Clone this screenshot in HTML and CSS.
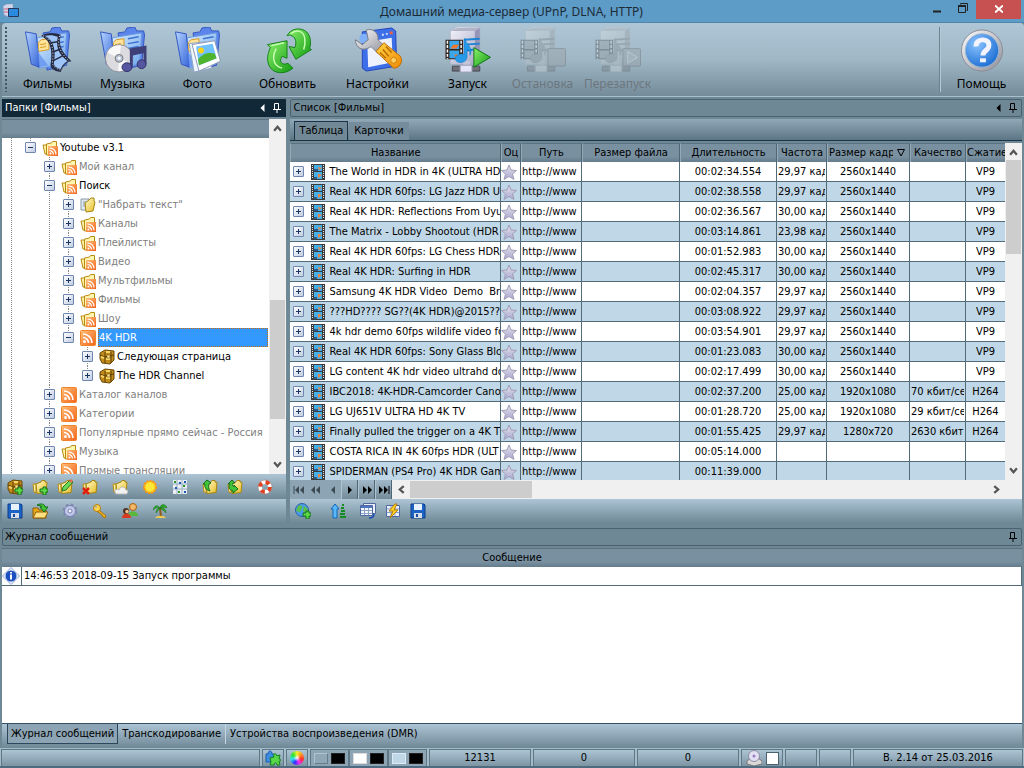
FILE: index.html
```html
<!DOCTYPE html>
<html lang="ru">

<head>
    <meta charset="UTF-8">
    <meta name="viewport" content="width=device-width, initial-scale=1.0">
    <title>Домашний медиа-сервер (UPnP, DLNA, HTTP)</title>
    <link rel="stylesheet" href="styles.css">
</head>

<body>
    <svg class="sprite" aria-hidden="true">
        <defs>
            <linearGradient id="gBlue" x1="0" y1="0" x2="1" y2="1">
                <stop offset="0" stop-color="#b5d4ff" />
                <stop offset="1" stop-color="#3565d8" />
            </linearGradient>
            <linearGradient id="gPaper" x1="0" y1="0" x2="1" y2="1">
                <stop offset="0" stop-color="#d8ecff" />
                <stop offset="1" stop-color="#6ba4ec" />
            </linearGradient>
            <linearGradient id="gGreen" x1="0" y1="0" x2="1" y2="1">
                <stop offset="0" stop-color="#8cf06c" />
                <stop offset="1" stop-color="#119b12" />
            </linearGradient>
            <linearGradient id="gMetal" x1="0" y1="0" x2="1" y2="1">
                <stop offset="0" stop-color="#ffffff" />
                <stop offset="1" stop-color="#8c8c98" />
            </linearGradient>
            <linearGradient id="gBody" x1="0" y1="0" x2="1" y2="1">
                <stop offset="0" stop-color="#f4f4fc" />
                <stop offset="1" stop-color="#a4a4c4" />
            </linearGradient>
            <linearGradient id="gOrange" x1="0" y1="0" x2="1" y2="1">
                <stop offset="0" stop-color="#ffd545" />
                <stop offset="1" stop-color="#ef8a08" />
            </linearGradient>
            <linearGradient id="gRss" x1="0" y1="0" x2="1" y2="1">
                <stop offset="0" stop-color="#ffc078" />
                <stop offset="1" stop-color="#f4621c" />
            </linearGradient>
            <linearGradient id="gFold" x1="0" y1="0" x2="1" y2="1">
                <stop offset="0" stop-color="#fffbd0" />
                <stop offset="1" stop-color="#e8bc20" />
            </linearGradient>
            <linearGradient id="gStar" x1="0" y1="0" x2="0" y2="1">
                <stop offset="0" stop-color="#e6e6ea" />
                <stop offset="1" stop-color="#a9a4d2" />
            </linearGradient>
            <radialGradient id="gHelp" cx=".35" cy=".3" r=".8">
                <stop offset="0" stop-color="#8cc4ff" />
                <stop offset="1" stop-color="#1468d0" />
            </radialGradient>
        </defs>

        <!-- big toolbar -->
        <symbol id="folder" viewBox="0 0 48 48">
            <path d="M19 6l7-1 2-4 8-1 2 4 7 0 1 4-3 31-20 5z" fill="#5b85ea" stroke="#3558c0" />
            <path d="M13 11l30-5-2 32-26 4z" fill="url(#gPaper)" stroke="#6c9ae0" />
            <path d="M29 12l11-2M29 17l11-2M29 22l11-2" stroke="#3d72d0" stroke-width="1.5" />
            <path d="M14 16l3-3 8-1v11l-11 2z" fill="#ffe39a" stroke="#d99a20" />
            <path d="M16 18l6-1M16 21l6-1" stroke="#d99a20" />
            <path d="M1 5l11 2 3 34-8-3z" fill="url(#gBlue)" stroke="#3558c0" />
            <path d="M11 12l4 29 9-2-9-12z" fill="#5c8cf0" opacity=".7" />
        </symbol>
        <symbol id="films" viewBox="0 0 48 48">
            <use href="#folder" />
            <path d="M17 9c8-4 14-3 20-1-2 9-1 16 11 27-5 0-9 5-11 11-7-1-12-4-10-10 1-11 1-21-10-27z" fill="#252b45" />
            <path d="M21 9c5-1 8-1 13 1-2 10 0 17 10 25-3 1-6 5-7 8-4-1-7-3-7-6 2-12 1-22-9-28z" fill="#9fc4f8" />
            <path d="M27 16l7-1M30 25l6-2M30 34l10-5" stroke="#252b45" stroke-width="1.5" />
            <path d="M19 9c10 5 11 15 9.500 27 0 4 3 6 8 8M36 9c-3 9 0 17 10 26" fill="none" stroke="#e8ecf5" stroke-dasharray="1 2" />
        </symbol>
        <symbol id="music" viewBox="0 0 48 48">
            <use href="#folder" />
            <circle cx="20" cy="32" r="14" fill="#dcdce0" stroke="#8f8f98" />
            <path d="M20 32L8 26c3-6 9-8 14-7zM20 32l12 5c-3 6-8 8-13 8z" fill="#fff" opacity=".8" />
            <circle cx="20" cy="32" r="4" fill="#b8c4d8" stroke="#777" />
            <circle cx="20" cy="32" r="1.5" fill="#fff" />
            <path d="M31 22l17-3v7l-14 3v12h-3zM45 24h3v14h-3z" fill="#3e3f78" />
            <ellipse cx="28" cy="41" rx="5" ry="4.500" fill="#5656a0" stroke="#303068" />
            <ellipse cx="43" cy="38" rx="4.500" ry="4.500" fill="#5656a0" stroke="#303068" />
        </symbol>
        <symbol id="photo" viewBox="0 0 48 48">
            <use href="#folder" />
            <path d="M15 17l17-2 6 27-18 4z" fill="#eef5ff" stroke="#8fa4c4" />
            <path d="M18 18l23-4 6 21-22 10z" fill="#fff" stroke="#8a9ab8" />
            <path d="M22 20l17-3 4 15-18 7z" fill="#6fc1ff" />
            <path d="M24 33c6-7 11-7 17-6l2 5-18 7z" fill="#4fb52e" />
            <circle cx="27" cy="24" r="3" fill="#ffd21a" />
        </symbol>
        <symbol id="refresh" viewBox="0 0 48 48">
            <path d="M23 9C27 1 37 0 43 5c4 4 5 11 3 17l2 1-16 10-7-13 6 1c2-5 1-10-3-12-2-1-4-1-5 0z" fill="url(#gGreen)" stroke="#14801a" />
            <path d="M27 7c5-5 13-3 14 4 1 5 0 9-1 12" fill="none" stroke="#c9ffb4" stroke-width="1.500" />
            <path d="M3 18l20-4v18l-5-2c-4 5 0 10 6 7l5 5c-8 7-20 6-24-2-3-6-2-12 1-19z" fill="url(#gGreen)" stroke="#14801a" />
            <path d="M12 22c-5 9-3 18 6 20M7 19l13-3" fill="none" stroke="#c9ffb4" stroke-width="1.500" />
        </symbol>
        <symbol id="settings" viewBox="0 0 48 48">
            <path d="M8 5l30-4 4 3 1 36-31 5-4-3z" fill="#3d6fe8" stroke="#2447b8" />
            <path d="M13 15l25-4 1 25-25 5z" fill="#eef2ff" />
            <path d="M28 8h2M32 7h2" stroke="#cfe0ff" stroke-width="2" />
            <path d="M36 6h3" stroke="#f06040" stroke-width="3" />
            <circle cx="10" cy="12" r="5" fill="#7fb0f8" />
            <path d="M12 3c7-2 13 3 12 10l7 7-7 7-7-7C8 26 1 21 1 13l7 5 6-5z" fill="url(#gMetal)" stroke="#777a84" />
            <path d="M22 25l8-9 17 14c3 6-1 12-7 12z" fill="url(#gOrange)" stroke="#c06a00" />
            <path d="M29 23l6 7M32 20l6 6M26 26l6 6" stroke="#b86a00" stroke-width="1.500" />
            <circle cx="40" cy="34" r="3" fill="#ffd060" stroke="#d08008" />
        </symbol>
        <symbol id="server" viewBox="0 0 48 48">
            <path d="M6 4l7-4h23v33l-5 5H6z" fill="url(#gBody)" stroke="#a2a2b8" stroke-width=".5" />
            <path d="M6 4h25l5-3H13z" fill="#b4b4c8" />
            <path d="M31 4l5-3v32l-5 5z" fill="#9494b8" />
            <path d="M20 13l16-1M20 18l16-1M22 24l9-1" stroke="#1a83d2" stroke-width="2" />
            <path d="M19 35h7v5h-7z" fill="#c4c4d8" />
            <path d="M8 40h28v5H8z" fill="#70707c" stroke="#484850" />
            <path d="M16 39h12v7H16z" fill="#e4e4f8" stroke="#a0a0b8" />
            <path d="M1 13h18v20H1z" fill="#33251f" />
            <path d="M5 14h10v8.500H5zM5 24h10v8H5z" fill="#3ba6e8" />
            <path d="M9 18h6l-3 4H6zM10 28h4l-3 3z" fill="#f0762c" />
            <path d="M3 14v19M17 14v19" stroke="#fff" stroke-width="1.500" stroke-dasharray="3 1.500" />
            <path d="M21 12c1 6 9 9 5 17 0-5-1-6-3-6v8c-1 7-12 7-12 1 0-3 5-5 9-4V12z" fill="#2699e8" stroke="#0873c4" stroke-width=".5" />
        </symbol>
        <symbol id="start" viewBox="0 0 48 48">
            <use href="#server" />
            <path d="M30 21v20l17-10z" fill="url(#gGreen)" stroke="#127218" />
        </symbol>
        <symbol id="stop" viewBox="0 0 48 48">
            <use href="#server" />
            <rect x="29" y="22" width="18" height="18" rx="1" fill="#999" stroke="#555" />
        </symbol>
        <symbol id="restart" viewBox="0 0 48 48">
            <use href="#server" />
            <rect x="29" y="22" width="18" height="18" rx="1" fill="#999" stroke="#555" />
            <path d="M34 25v12l10-6z" fill="#aaa" stroke="#eee" />
        </symbol>
        <symbol id="help" viewBox="0 0 48 48">
            <circle cx="24" cy="24" r="21" fill="url(#gMetal)" stroke="#888c94" />
            <circle cx="24" cy="24" r="17" fill="url(#gHelp)" stroke="#9ab4d0" />
            <path d="M18 20c-1-9 14-9 13-1 0 5-6 5-6 10" fill="none" stroke="#f4f4ff" stroke-width="5" />
            <path d="M22 32h6v4h-6z" fill="#f4f4ff" />
        </symbol>

        <!-- 16px set -->
        <symbol id="app" viewBox="0 0 16 16">
            <path d="M0 2l4-2h6v12l-4 1-5-2z" fill="#d0d5e8" stroke="#8894b8" stroke-width=".5" />
            <path d="M1 5h5M1 8h4" stroke="#d06080" />
            <path d="M5.500 4.500h10v8h-10z" fill="#2a8ae0" stroke="#25385c" />
        </symbol>
        <symbol id="rss" viewBox="0 0 16 16">
            <rect x=".5" y=".5" width="15" height="15" rx="1" fill="url(#gRss)" stroke="#f08428" />
            <circle cx="4.500" cy="11.500" r="1.500" fill="#fff" />
            <path d="M3 7.500c3 0 5.500 2.500 5.500 5.500M3 4c5 0 9 4 9 9" fill="none" stroke="#fff" stroke-width="1.700" />
        </symbol>
        <symbol id="feeds" viewBox="0 0 16 16">
            <path d="M1 5h4v9H3z" fill="#fff3a8" stroke="#b88a10" />
            <path d="M4.500 4l5-1 1-1.500h4V7h-2v8h-8z" fill="#fff6b0" stroke="#b88a10" />
            <rect x="6" y="6" width="10" height="10" fill="url(#gRss)" />
            <path d="M7.500 10.500c2 0 4 2 4 4M7.500 8c4 0 6.500 3 6.500 6.500" fill="none" stroke="#fff" stroke-width="1.200" />
            <circle cx="8.500" cy="13.500" r="1" fill="#fff" />
        </symbol>
        <symbol id="search" viewBox="0 0 16 16">
            <path d="M1 2h8v11H1z" fill="#dfe9f4" stroke="#8898a8" />
            <path d="M3 5h4M3 7h4M3 9h4" stroke="#8898a8" />
            <path d="M5 6l4-3 2-2h3v3l1 1-2 9-7 1z" fill="url(#gFold)" stroke="#a8860c" />
        </symbol>
        <symbol id="chest" viewBox="0 0 16 16">
            <path d="M1 4l5-3 9 1v9l-4 4-8-1-2-4z" fill="#c08a18" stroke="#6b480a" />
            <path d="M6 3v11M1 6l5 2 9-2M12 3v11" fill="none" stroke="#5f3f08" />
            <path d="M7 3h4M7 10h4M2 8l3 1" stroke="#f6d568" stroke-width="2" />
            <path d="M8 6h3v3H8z" fill="#ffe88c" stroke="#5f3f08" stroke-width=".5" />
        </symbol>
        <symbol id="film" viewBox="0 0 14 16">
            <path d="M0 0h14v16H0z" fill="#3c3c3c" />
            <path d="M1.500 1v14M12.500 1v14" stroke="#e4e4e4" stroke-dasharray="1 1" />
            <path d="M3 1h8v6H3zM3 8h8v7H3z" fill="#48b0e8" />
            <path d="M7 3l4 1-3 2zM7 10l4 1-4 3z" fill="#f0803a" />
            <path d="M3 5h4v2H3zM3 13h3v2H3z" fill="#2a5a8a" />
        </symbol>
        <symbol id="star" viewBox="0 0 16 16">
            <path d="M8 1l2 5 5.500.5L11.500 10l1.500 5.500-5-3-5 3L4.500 10 .5 6.500 6 6z" fill="url(#gStar)" stroke="#a09eb6" />
        </symbol>
        <symbol id="fold" viewBox="0 0 16 16">
            <path d="M1 5h3v9l-2-1z" fill="#fff3a8" stroke="#b88a10" />
            <path d="M4 5l5-2 1-1.500h3V3l2 .5-1 10-9 1z" fill="url(#gFold)" stroke="#a8860c" />
        </symbol>
        <symbol id="plus" viewBox="0 0 16 16">
            <path d="M11 8h3v2h2v3h-2v3h-3v-3H8v-3h3z" fill="#5fd848" stroke="#137018" />
        </symbol>
        <symbol id="chestAdd" viewBox="0 0 16 16"><use href="#chest" /><use href="#plus" /></symbol>
        <symbol id="foldAdd" viewBox="0 0 16 16"><use href="#fold" /><use href="#plus" /></symbol>
        <symbol id="foldEdit" viewBox="0 0 16 16">
            <use href="#fold" />
            <path d="M5 12l1-4 7-7 3 2-7 8z" fill="#6cd858" stroke="#237a20" />
            <path d="M12 2l2-2 2 2-2 2z" fill="#e86850" />
        </symbol>
        <symbol id="foldDel" viewBox="0 0 16 16">
            <use href="#fold" />
            <path d="M1 9l6 6M7 9l-6 6" stroke="#e02010" stroke-width="2.500" />
        </symbol>
        <symbol id="foldCloud" viewBox="0 0 16 16">
            <use href="#fold" />
            <path d="M4 15c-3-4 1-6 3-4 1-4 6-4 7 0 3 0 2 4 0 4z" fill="#f2f2f2" stroke="#b8b8b8" />
        </symbol>
        <symbol id="sun" viewBox="0 0 16 16">
            <circle cx="8" cy="8" r="6" fill="#ffd020" stroke="#ff9810" stroke-width="2" stroke-dasharray="2 1" />
            <circle cx="8" cy="8" r="4.500" fill="#ffe838" />
        </symbol>
        <symbol id="grid" viewBox="0 0 16 16">
            <path d="M1 1h14v14H1z" fill="#e8eef4" />
            <path d="M1 5h14M1 10h14M5 1v14M10 1v14" stroke="#9ab0c0" />
            <path d="M2 2h2v2H2zM11 6h2v2h-2zM6 12h2v2H6z" fill="#28962c" />
            <path d="M7 3h2v2H7zM3 8h2v2H3zM12 12h2v2h-2zM12 2h2v2h-2z" fill="#2458b8" />
        </symbol>
        <symbol id="foldUp" viewBox="0 0 16 16">
            <use href="#fold" />
            <path d="M1 5l4-4 4 3-2 1c-1 3 0 5 1 7-4-1-6-4-5-7z" fill="#44c438" stroke="#126c18" />
        </symbol>
        <symbol id="foldBack" viewBox="0 0 16 16">
            <use href="#fold" />
            <path d="M1 5l4-4 3 3H6c-1 2 0 3 1 4V6l4 4-5 4v-2C2 11 1 8 3 5z" fill="#44c438" stroke="#126c18" />
        </symbol>
        <symbol id="ring" viewBox="0 0 16 16">
            <circle cx="8" cy="8" r="5" fill="none" stroke="#fff" stroke-width="4" />
            <circle cx="8" cy="8" r="5" fill="none" stroke="#e04020" stroke-width="4" stroke-dasharray="4 3.850" />
            <circle cx="8" cy="8" r="7" fill="none" stroke="#a07068" stroke-width=".5" />
        </symbol>
        <symbol id="save" viewBox="0 0 16 16">
            <path d="M1 1h13l1 1v13H1z" fill="#1c62c4" stroke="#0c3c8c" />
            <path d="M4 1h8v6H4z" fill="#e8f2fc" />
            <path d="M4 10h8v5H4z" fill="#d5dde8" />
            <path d="M6 11h2v3H6z" fill="#1c4c9c" />
        </symbol>
        <symbol id="open" viewBox="0 0 16 16">
            <path d="M1 5h5l1 2h7v8H1z" fill="#e8a818" stroke="#8a5c08" />
            <path d="M1 15l3-6h12l-3 6z" fill="#ffe080" stroke="#8a5c08" />
            <path d="M5 2c4-2 8-1 8 2h3l-4 5-4-5h2c0-1-2-1-5-2z" fill="#44c438" stroke="#126c18" />
        </symbol>
        <symbol id="gear" viewBox="0 0 16 16">
            <circle cx="8" cy="8" r="6" fill="#b4bcdc" stroke="#8088b0" stroke-width="3" stroke-dasharray="2.500 2.200" />
            <circle cx="8" cy="8" r="5.500" fill="#c0c8e8" stroke="#7880b0" />
            <circle cx="8" cy="8" r="2" fill="#f4f4ff" stroke="#7880b0" />
        </symbol>
        <symbol id="key" viewBox="0 0 16 16">
            <path d="M7 7l7 6-1 2-2-1-1-2-4-3z" fill="#f4b820" stroke="#a87008" />
            <circle cx="5" cy="5" r="3.500" fill="#ffd650" stroke="#b87c08" />
            <circle cx="4" cy="4" r="1" fill="#8ea6b4" />
        </symbol>
        <symbol id="users" viewBox="0 0 16 16">
            <circle cx="11" cy="4" r="3.500" fill="#f0b868" stroke="#a86010" />
            <path d="M6 13c0-6 10-6 10 0z" fill="#58b838" />
            <circle cx="4" cy="8" r="3" fill="#4a3020" />
            <path d="M0 15c0-6 9-6 9 0z" fill="#d83c20" />
            <circle cx="5" cy="8.500" r="1.700" fill="#f4c48c" />
        </symbol>
        <symbol id="palm" viewBox="0 0 16 16">
            <path d="M8 5l1 9" stroke="#8a5c18" stroke-width="2" />
            <path d="M8 5C5 1 2 3 1 7c3-3 5-2 7-2zM8 5c1-5 6-4 7 0-3-1-5-1-7 0zM8 5c4-1 6 2 6 5-2-3-4-3-6-5zM8 5c-3 0-4 3-4 5 1-2 3-3 4-5z" fill="#2aa828" stroke="#176c18" stroke-width=".5" />
            <path d="M3 15c2-3 9-3 11 0z" fill="#f0cc50" />
        </symbol>
        <symbol id="globe" viewBox="0 0 16 16">
            <circle cx="7" cy="7" r="6.500" fill="#4a9ce8" stroke="#2860a8" />
            <path d="M3 3c3-2 5 0 4 2L5 9 1 8zM9 3l4 3-2 4-3-2z" fill="#58c048" />
            <use href="#plus" />
        </symbol>
        <symbol id="sort" viewBox="0 0 16 16">
            <path d="M5 1l4 5H7v9H3V6H1z" fill="#58b8f8" stroke="#1468b8" />
            <path d="M12 2h2M11 5h3M11 8h4M10 11h5M10 14h6" stroke="#148c20" stroke-width="2" />
        </symbol>
        <symbol id="columns" viewBox="0 0 16 16">
            <path d="M3.500.5h12v10h-12z" fill="#e8f0fc" stroke="#5068a0" />
            <path d="M.5 2.500h12v10H.5z" fill="#f4f8ff" stroke="#5068a0" />
            <path d="M1 3h11v2H1z" fill="#4c74c0" />
            <path d="M1 7.500h11M1 10.500h11M4.500 5v7M8.500 5v7" stroke="#8ca0c8" />
            <path d="M9 15c4 0 5-2 5-4" fill="none" stroke="#1848b0" stroke-width="1.500" />
        </symbol>
        <symbol id="flash" viewBox="0 0 16 16">
            <path d="M1.500 2.500h13v11h-13z" fill="#e8f0fc" stroke="#5068a0" />
            <path d="M2 6h12M2 9.500h12M6 3v10M10 3v10" stroke="#8ca0c8" />
            <path d="M10 1L4 8h4l-3 7 8-8H9l3-6z" fill="#ffd628" stroke="#b87c08" />
        </symbol>
        <symbol id="info" viewBox="0 0 18 18">
            <path d="M9 .5L17.500 9 9 17.500.5 9z" fill="#e8eefc" stroke="#90a4d0" />
            <circle cx="9" cy="9" r="5.500" fill="#1c50c0" />
            <path d="M9 7.500v5M9 5v1.500" stroke="#fff" stroke-width="2" />
        </symbol>
        <symbol id="puzzle" viewBox="0 0 16 16">
            <path d="M1 4h2c0-4 4-4 4 0h2v8H1z" fill="#3c8ce0" stroke="#1c5cb0" />
            <path d="M5 8l4-1c-2-4 3-4 3-1l3-1-1 4c3 0 2 3 0 2l1 4h-3c0-3-3-3-3 0H5l1-3z" fill="#58d848" stroke="#178020" />
        </symbol>
        <symbol id="disc" viewBox="0 0 16 16">
            <path d="M1 11l4-3h7l4 3v3l-8 2-7-2z" fill="#d8d8d8" stroke="#777" />
            <circle cx="8" cy="6" r="5.500" fill="#e4e0f4" stroke="#8c8ca0" />
            <circle cx="8" cy="6" r="1.500" fill="#9c7cc0" />
        </symbol>

        <!-- small glyphs -->
        <symbol id="pin" viewBox="0 0 8 10">
            <path d="M1.500 6V.5h4V6M0 6.500h8M4 7v3M5.500 1v5" fill="none" stroke="currentColor" />
        </symbol>
        <symbol id="tri" viewBox="0 0 5 8">
            <path d="M4.500 0v8L.5 4z" fill="currentColor" />
        </symbol>
        <symbol id="chev" viewBox="0 0 8 8">
            <path d="M1 6l3-3.500L7 6" fill="none" stroke="currentColor" stroke-width="2" />
        </symbol>
    </svg>

    <header class="titlebar">
        <svg class="i16"><use href="#app" /></svg>
        <h1>Домашний медиа-сервер (UPnP, DLNA, HTTP)</h1>
        <button type="button" class="win" aria-label="Свернуть"><svg width="10" height="10"><path d="M1 8.500h8" stroke="#222" stroke-width="2" /></svg></button>
        <button type="button" class="win" aria-label="Развернуть"><svg width="10" height="10"><path d="M2.500 1.500V.5h7v7h-1M.5 3h7v6.500h-7z" fill="none" stroke="#222" /><path d="M0 3h8" stroke="#222" stroke-width="2" /></svg></button>
        <button type="button" class="win close" aria-label="Закрыть"><svg width="8" height="8"><path d="M0 .5l8 7M8 .5l-8 7" stroke="#fff" stroke-width="2" /></svg></button>
    </header>

    <nav class="toolbar">
        <span class="grip"></span>
        <button type="button"><svg><use href="#films" /></svg>Фильмы</button>
        <button type="button"><svg><use href="#music" /></svg>Музыка</button>
        <button type="button"><svg><use href="#photo" /></svg>Фото</button>
        <button type="button" class="apart"><svg><use href="#refresh" /></svg>Обновить</button>
        <button type="button" class="apart"><svg><use href="#settings" /></svg>Настройки</button>
        <button type="button" class="apart"><svg><use href="#start" /></svg>Запуск</button>
        <button type="button" disabled><svg><use href="#stop" /></svg>Остановка</button>
        <button type="button" disabled><svg><use href="#restart" /></svg>Перезапуск</button>
        <span class="divider"></span>
        <button type="button"><svg><use href="#help" /></svg>Помощь</button>
    </nav>

    <main class="workspace">
        <section class="folders">
            <div class="caption active">
                <h2>Папки [Фильмы]</h2>
                <svg class="tri"><use href="#tri" /></svg>
                <svg class="pin"><use href="#pin" /></svg>
            </div>
            <div class="tree_box">
                <div class="tree_main">
                    <div class="band"></div>
                    <div class="tree"></div>
                </div>
                <div class="vscroll">
                    <svg><use href="#chev" /></svg>
                    <div class="track tree_track"><span></span></div>
                    <svg class="down"><use href="#chev" /></svg>
                </div>
            </div>
            <div class="tools">
                <button type="button"><svg><use href="#chestAdd" /></svg></button>
                <button type="button"><svg><use href="#foldAdd" /></svg></button>
                <button type="button"><svg><use href="#foldEdit" /></svg></button>
                <button type="button"><svg><use href="#foldDel" /></svg></button>
                <button type="button" class="apart"><svg><use href="#foldCloud" /></svg></button>
                <button type="button" class="apart"><svg><use href="#sun" /></svg></button>
                <button type="button" class="apart"><svg><use href="#grid" /></svg></button>
                <button type="button" class="apart"><svg><use href="#foldUp" /></svg></button>
                <button type="button"><svg><use href="#foldBack" /></svg></button>
                <button type="button" class="apart"><svg><use href="#ring" /></svg></button>
            </div>
            <div class="tools">
                <button type="button"><svg><use href="#save" /></svg></button>
                <button type="button"><svg><use href="#open" /></svg></button>
                <button type="button" class="apart"><svg><use href="#gear" /></svg></button>
                <button type="button" class="apart"><svg><use href="#key" /></svg></button>
                <button type="button" class="apart"><svg><use href="#users" /></svg></button>
                <button type="button" class="apart"><svg><use href="#palm" /></svg></button>
            </div>
        </section>

        <section class="list">
            <div class="caption">
                <h2>Список [Фильмы]</h2>
                <svg class="tri"><use href="#tri" /></svg>
                <svg class="pin"><use href="#pin" /></svg>
            </div>
            <div class="tabs">
                <button type="button" class="current">Таблица</button>
                <button type="button">Карточки</button>
            </div>
            <div class="table_box">
                <div class="table_clip">
                    <table class="media">
                        <colgroup>
                            <col><col class="c_rate"><col class="c_path"><col class="c_size"><col class="c_time"><col class="c_fps"><col class="c_frame"><col class="c_quality"><col class="c_codec">
                        </colgroup>
                        <thead>
                            <tr>
                                <th>Название</th>
                                <th>Оц</th>
                                <th>Путь</th>
                                <th>Размер файла</th>
                                <th>Длительность</th>
                                <th>Частота</th>
                                <th><div class="sorted"><span>Размер кадр</span><svg width="9" height="8"><path d="M.5.5h7L4 7z" fill="none" stroke="#000" /></svg></div></th>
                                <th>Качество</th>
                                <th>Сжатие</th>
                            </tr>
                        </thead>
                        <tbody></tbody>
                    </table>
                </div>
                <div class="vscroll">
                    <svg><use href="#chev" /></svg>
                    <div class="track list_track"><span></span></div>
                    <svg class="down"><use href="#chev" /></svg>
                </div>
            </div>
            <div class="navigator">
                <button type="button" disabled><svg viewBox="0 0 12 8"><path d="M1 0v8" stroke="currentColor" /><path d="M6 0v8L2 4zM11 0v8L7 4z" /></svg></button>
                <button type="button" disabled><svg viewBox="0 0 12 8"><path d="M5 0v8L1 4zM10 0v8L6 4z" /></svg></button>
                <button type="button" disabled><svg viewBox="0 0 12 8"><path d="M8 0v8L4 4z" /></svg></button>
                <button type="button"><svg viewBox="0 0 12 8"><path d="M4 0v8l4-4z" /></svg></button>
                <button type="button"><svg viewBox="0 0 12 8"><path d="M2 0v8l4-4zM7 0v8l4-4z" /></svg></button>
                <button type="button"><svg viewBox="0 0 12 8"><path d="M1 0v8l4-4zM6 0v8l4-4z" /><path d="M11 0v8" stroke="currentColor" /></svg></button>
                <div class="hscroll">
                    <svg class="left"><use href="#chev" /></svg>
                    <div class="htrack"><span></span></div>
                    <svg class="right"><use href="#chev" /></svg>
                </div>
            </div>
            <div class="tools">
                <button type="button"><svg><use href="#globe" /></svg></button>
                <button type="button" class="far"><svg><use href="#sort" /></svg></button>
                <button type="button" class="apart"><svg><use href="#columns" /></svg></button>
                <button type="button"><svg><use href="#flash" /></svg></button>
                <button type="button"><svg><use href="#save" /></svg></button>
            </div>
        </section>
    </main>

    <section class="log">
        <div class="caption">
            <h2>Журнал сообщений</h2>
            <svg class="pin"><use href="#pin" /></svg>
        </div>
        <div class="log_box">
            <table class="messages">
                <thead>
                    <tr><th colspan="2">Сообщение</th></tr>
                </thead>
                <tbody>
                    <tr>
                        <td class="kind"><svg width="18" height="18"><use href="#info" /></svg></td>
                        <td>14:46:53 2018-09-15 Запуск программы</td>
                    </tr>
                </tbody>
            </table>
        </div>
        <div class="log_tabs">
            <button type="button" class="current">Журнал сообщений</button>
            <button type="button">Транскодирование</button>
            <button type="button">Устройства воспроизведения (DMR)</button>
        </div>
    </section>

    <footer class="status">
        <div class="cell grow"></div>
        <div class="cell icon"><svg class="i16"><use href="#puzzle" /></svg></div>
        <div class="cell icon"><span class="wheel"></span></div>
        <div class="swatches">
            <div><i class="gray"></i><i></i></div>
            <div><i class="white"></i><i></i></div>
            <div><i class="pale"></i><i></i></div>
        </div>
        <div class="cell count">12131</div>
        <div class="cell count">0</div>
        <div class="cell count">0</div>
        <div class="cell disc"><svg class="i16"><use href="#disc" /></svg><input type="checkbox" aria-label="Диск"></div>
        <div class="cell blank"></div>
        <div class="cell blank"></div>
        <div class="cell version">В. 2.14 от 25.03.2016</div>
    </footer>

    <script>
        const tree = document.querySelector('.tree');
        const rows = document.querySelector('.media tbody');

        // name, icon, state, children
        const folders = [
            ['Youtube v3.1', 'feeds', 'open', [
                ['Мой канал', 'feeds', 'dim'],
                ['Поиск', 'feeds', 'open', [
                    ['"Набрать текст"', 'search', 'dim'],
                    ['Каналы', 'feeds', 'dim'],
                    ['Плейлисты', 'feeds', 'dim'],
                    ['Видео', 'feeds', 'dim'],
                    ['Мультфильмы', 'feeds', 'dim'],
                    ['Фильмы', 'feeds', 'dim'],
                    ['Шоу', 'feeds', 'dim'],
                    ['4K HDR', 'rss', 'open selected', [
                        ['Следующая страница', 'chest', ''],
                        ['The HDR Channel', 'chest', '']
                    ]]
                ]],
                ['Каталог каналов', 'rss', 'dim'],
                ['Категории', 'rss', 'dim'],
                ['Популярные прямо сейчас - Россия', 'rss', 'dim'],
                ['Музыка', 'feeds', 'dim'],
                ['Прямые трансляции', 'rss', 'dim']
            ]]
        ];

        const media = [
            ['The World in HDR in 4K (ULTRA HD)', '00:02:34.554', '29,97 кад', '2560x1440', '', 'VP9'],
            ['Real 4K HDR 60fps: LG Jazz HDR UH', '00:02:38.558', '29,97 кад', '2560x1440', '', 'VP9'],
            ['Real 4K HDR: Reflections From Uyu', '00:02:36.567', '30,00 кад', '2560x1440', '', 'VP9'],
            ['The Matrix - Lobby Shootout (HDR', '00:03:14.861', '23,98 кад', '2560x1440', '', 'VP9'],
            ['Real 4K HDR 60fps: LG Chess HDR', '00:01:52.983', '30,00 кад', '2560x1440', '', 'VP9'],
            ['Real 4K HDR: Surfing in HDR', '00:02:45.317', '30,00 кад', '2560x1440', '', 'VP9'],
            ['Samsung 4K HDR Video  Demo  Braz', '00:02:04.357', '29,97 кад', '2560x1440', '', 'VP9'],
            ['???HD???? SG??(4K HDR)@2015???', '00:03:08.922', '29,97 кад', '2560x1440', '', 'VP9'],
            ['4k hdr demo 60fps wildlife video for', '00:03:54.901', '29,97 кад', '2560x1440', '', 'VP9'],
            ['Real 4K HDR 60fps: Sony Glass Blow', '00:01:23.083', '30,00 кад', '2560x1440', '', 'VP9'],
            ['LG content 4K hdr video ultrahd dol', '00:02:17.499', '30,00 кад', '2560x1440', '', 'VP9'],
            ['IBC2018: 4K-HDR-Camcorder Cano', '00:02:37.200', '25,00 кад', '1920x1080', '70 кбит/се', 'H264'],
            ['LG UJ651V ULTRA HD 4K TV', '00:01:28.720', '25,00 кад', '1920x1080', '29 кбит/се', 'H264'],
            ['Finally pulled the trigger on a 4K TV', '00:01:55.425', '29,97 кад', '1280x720', '2630 кбит', 'H264'],
            ['COSTA RICA IN 4K 60fps HDR (ULT', '00:05:14.000', '', '', '', ''],
            ['SPIDERMAN (PS4 Pro) 4K HDR Gam', '00:11:39.000', '', '', '', '']
        ];

        function expander(open) {
            return `<button type="button" class="expander${open ? ' minus' : ''}" aria-label="Раскрыть"></button>`;
        }

        function branch(items) {
            let html = '<ul>';
            for (const [name, icon, state, children] of items) {
                html += `<li><div class="node ${state}">${expander(state.includes('open'))}
                    <svg><use href="#${icon}" /></svg><span>${name}</span></div>
                    ${children ? branch(children) : ''}</li>`;
            }
            return html + '</ul>';
        }

        tree.innerHTML = branch(folders);

        for (const [name, time, fps, frame, quality, codec] of media) {
            rows.innerHTML += `<tr>
                <td><div class="name">${expander(false)}<svg><use href="#film" /></svg><span>${name}</span></div></td>
                <td class="rate"><svg><use href="#star" /></svg></td>
                <td class="text"><div>http://www</div></td>
                <td></td>
                <td>${time}</td>
                <td class="text"><div>${fps}</div></td>
                <td>${frame}</td>
                <td class="text"><div>${quality}</div></td>
                <td>${codec}</td>
            </tr>`;
        }
    </script>
</body>

</html>
```
FILE: styles.css
```css
*,
::before,
::after {
    box-sizing: border-box;
}

body {
    margin: 0;
    height: 100vh;
    display: flex;
    flex-direction: column;
    overflow: hidden;
    background: #6f8896;
    color: #000;
    font-family: "DejaVu Sans Condensed", "Noto Sans", sans-serif;
    font-size: 11px;
    line-height: 14px;
}

button {
    margin: 0;
    padding: 0;
    border: 0;
    background: none;
    font: inherit;
    color: inherit;
}

h1,
h2 {
    margin: 0;
    font-size: 11px;
    font-weight: normal;
    flex: 1;
}

.sprite {
    position: absolute;
    width: 0;
    height: 0;
}

.i16 {
    width: 16px;
    height: 16px;
}

/* title bar */

.titlebar {
    height: 23px;
    flex: none;
    display: flex;
    padding-left: 3px;
    background: #5e9cc8;
    border-bottom: 1px solid #4f86ac;
}

.titlebar .i16 {
    margin-top: 4px;
}

.titlebar h1 {
    padding-left: 80px;
    text-align: center;
    font-family: "Noto Sans", sans-serif;
    font-size: 12px;
    line-height: 24px;
    color: #1c2a34;
}

.win {
    width: 26px;
    height: 19px;
}

.win.close {
    width: 45px;
    margin-right: 3px;
    background: #c75050;
}

/* main toolbar */

.toolbar {
    height: 74px;
    flex: none;
    display: flex;
    margin-left: 2px;
    padding: 4px 5px 4px 3px;
    background: linear-gradient(#aec6d6, #a0b7c6 50%, #748c9a);
    border-bottom: 1px solid #a9bfcd;
    border-radius: 4px 4px 0 0;
}

.toolbar button {
    width: 75px;
    display: flex;
    flex-direction: column;
    align-items: center;
    font-family: "Noto Sans", sans-serif;
    font-size: 12px;
    line-height: 16px;
}

.toolbar svg {
    width: 48px;
    height: 48px;
    margin-bottom: 2px;
}

.toolbar button:disabled {
    color: #6d777e;
}

.toolbar button:disabled svg {
    filter: grayscale(1);
    opacity: .3;
}

.toolbar .apart {
    margin-left: 15px;
}

.grip {
    width: 2px;
    margin-right: 3px;
    background: repeating-linear-gradient(#3f5968 0 2px, transparent 2px 4px);
}

.divider {
    width: 2px;
    margin-left: auto;
    margin-right: 3px;
    background: #6a8291;
    border-right: 1px solid #b5cad7;
}

/* docked panels */

.workspace {
    flex: 424 1 0;
    min-height: 0;
    display: grid;
    grid-template-columns: 28fr 72fr;
    gap: 4px;
    padding: 2px 2px 4px;
}

.folders,
.list {
    min-width: 0;
    min-height: 0;
    display: flex;
    flex-direction: column;
}

.caption {
    height: 18px;
    flex: none;
    display: flex;
    align-items: center;
    gap: 8px;
    margin-bottom: 2px;
    padding: 0 4px 0 2px;
    border: 1px solid #4a616f;
    border-radius: 2px;
}

.caption.active {
    background: #102837;
    border-color: #102837;
    border-radius: 0;
    color: #fff;
}

.tri {
    width: 5px;
    height: 8px;
}

.pin {
    width: 8px;
    height: 10px;
}

.band,
.media th,
.messages th {
    height: 19px;
    background: linear-gradient(#7990a0 70%, #647c8b);
    border-top: 1px solid #5b7280;
}

.tree_box,
.table_box {
    flex: 1;
    min-height: 0;
    display: flex;
    overflow: hidden;
    background: #fff;
}

.tree_main,
.table_clip {
    flex: 1;
    min-width: 0;
    overflow: hidden;
}

/* tree */

.tree {
    height: 100%;
    padding-left: 23px;
    background: repeating-linear-gradient(#888 0 1px, #fff 1px 2px) 9px 0 / 1px 100% no-repeat;
}

.tree ul {
    margin: 0;
    padding: 0;
    list-style: none;
}

.tree ul ul {
    margin-left: 19px;
}

.tree li {
    background: repeating-linear-gradient(#888 0 1px, #fff 1px 2px) 5px 0 / 1px 100% no-repeat;
}

.tree li:last-child {
    background-size: 1px 9px;
}

.node {
    height: 19px;
    display: flex;
    align-items: center;
    white-space: nowrap;
}

.node svg {
    width: 16px;
    height: 16px;
    flex: none;
    margin-left: 6px;
}

.node span {
    flex: 1;
    margin-left: 2px;
    line-height: 19px;
}

.node.dim {
    color: #808080;
}

.node.selected span {
    margin-right: 1px;
    border: 1px dotted #cc6600;
    background: #3399ff;
    line-height: 17px;
    color: #fff;
}

.expander {
    width: 11px;
    height: 11px;
    flex: none;
    border: 1px solid #6f86ae;
    border-radius: 1px;
    background:
        linear-gradient(#1c3560, #1c3560) 2px 4px / 5px 1px no-repeat,
        linear-gradient(#1c3560, #1c3560) 4px 2px / 1px 5px no-repeat,
        linear-gradient(135deg, #fff, #c0cde2);
}

.expander.minus {
    background:
        linear-gradient(#1c3560, #1c3560) 2px 4px / 5px 1px no-repeat,
        linear-gradient(135deg, #fff, #c0cde2);
}

/* scroll bars */

.vscroll {
    width: 17px;
    flex: none;
    display: flex;
    flex-direction: column;
    align-items: center;
    padding: 5px 0;
    background: #f0f0f0;
    color: #555;
}

.vscroll svg,
.hscroll svg {
    width: 9px;
    height: 9px;
    flex: none;
}

.vscroll .down {
    transform: rotate(180deg);
}

.track {
    width: 15px;
    flex: 1;
    margin: 3px 0;
    display: flex;
    flex-direction: column;
}

.track span,
.htrack span {
    background: #cdcdcd;
}

.tree_track span {
    margin-top: 164px;
    height: 37%;
}

.list_track span {
    height: 31%;
}

.hscroll {
    flex: 1;
    display: flex;
    align-items: center;
    padding: 0 21px 0 5px;
    background: #f0f0f0;
    color: #555;
}

.hscroll .left {
    transform: rotate(-90deg);
}

.hscroll .right {
    transform: rotate(90deg);
}

.htrack {
    height: 17px;
    flex: 1;
    display: flex;
    margin: 0 4px;
}

.htrack span {
    width: 21%;
}

/* small tool strips */

.tools {
    height: 25px;
    flex: none;
    display: flex;
    background: linear-gradient(#acc4d4, #6f8896);
}

.tools + .tools,
.list .tools {
    height: 24px;
}

.tools button {
    width: 25px;
    display: flex;
    align-items: center;
    justify-content: center;
}

.tools svg {
    width: 16px;
    height: 16px;
}

.tools .apart {
    margin-left: 5px;
}

.tools .far {
    margin-left: 10px;
}

/* list */

.tabs {
    height: 22px;
    flex: none;
    display: flex;
    align-items: flex-end;
    margin-bottom: 2px;
    padding-left: 4px;
    background: linear-gradient(#90a8b8, #5d7686);
    border-bottom: 1px solid #1b3548;
}

.tabs button {
    height: 18px;
    padding: 0 5px;
    background: #748c9b;
}

.tabs .current {
    height: 19px;
    border: 1px solid #1b3548;
    border-bottom: 0;
    padding: 0 4px;
    margin-right: 1px;
    background: #718996;
}

.media {
    width: 100%;
    table-layout: fixed;
    border-collapse: separate;
    border-spacing: 0;
}

.c_rate { width: 20px; }
.c_path { width: 61px; }
.c_size { width: 98px; }
.c_time { width: 97px; }
.c_fps { width: 50px; }
.c_frame { width: 83px; }
.c_quality { width: 56px; }
.c_codec { width: 39px; }

.media th {
    padding: 0;
    border-right: 1px solid #4f6674;
    border-left: 1px solid #93a9b7;
    font-weight: normal;
    white-space: nowrap;
    overflow: hidden;
}

.sorted {
    display: flex;
    align-items: center;
    gap: 4px;
    padding-left: 1px;
}

.sorted span {
    width: 64px;
    overflow: hidden;
}

.sorted svg {
    flex: none;
}

.media td {
    height: 20px;
    padding: 0;
    border-right: 1px solid #526b79;
    border-bottom: 1px solid #526b79;
    text-align: center;
    white-space: nowrap;
    overflow: hidden;
}

.media th:last-child,
.media td:last-child {
    border-right: 0;
}

.media tr:nth-child(even) td {
    background: #bfd7e6;
}

.media .text {
    padding: 0 1px;
    text-align: left;
}

.text div {
    overflow: hidden;
}

.name {
    height: 19px;
    display: flex;
    align-items: center;
    padding-left: 3px;
}

.name svg {
    width: 14px;
    height: 16px;
    flex: none;
    margin: 0 4px 0 7px;
}

.name span {
    flex: 1;
    overflow: hidden;
    text-align: left;
    white-space: pre;
}

.rate svg {
    width: 16px;
    height: 16px;
    display: block;
}

.navigator {
    height: 19px;
    flex: none;
    display: flex;
    background: #8ca4b3;
}

.navigator button {
    width: 17px;
    display: flex;
    align-items: center;
    justify-content: center;
    background: linear-gradient(#a0b8c7, #748c9a);
    border-right: 1px solid #4f6674;
    border-left: 1px solid #b0c5d2;
}

.navigator button:disabled {
    background: #8ca4b3;
    border-color: transparent;
    color: #3c4a54;
}

.navigator button svg {
    width: 12px;
    height: 8px;
    flex: none;
    fill: currentColor;
}

/* log */

.log {
    flex: 220 1 0;
    min-height: 0;
    display: flex;
    flex-direction: column;
    padding: 1px 2px 0;
}

.log_box {
    flex: 1;
    min-height: 0;
    overflow: hidden;
    background: #fff;
}

.messages {
    width: 100%;
    border-spacing: 0;
}

.messages th {
    padding: 0;
    font-weight: normal;
}

.messages td {
    height: 19px;
    padding: 0 2px;
    border-bottom: 1px solid #526b79;
    border-right: 1px solid #526b79;
}

.messages .kind {
    width: 20px;
    padding: 0;
}

.kind svg {
    display: block;
}

.log_tabs {
    height: 25px;
    flex: none;
    display: flex;
    padding: 0 0 4px 5px;
    border-top: 1px solid #34506a;
    background: linear-gradient(#acc4d4, #6f8896);
}

.log_tabs button {
    padding: 0 4px;
}

.log_tabs .current {
    padding: 0 3px;
    border: 1px solid #2c465c;
    border-top: 0;
    background: #8ca4b3;
}

.log_tabs button:last-child {
    border-left: 1px solid #c4d6e2;
}

/* status bar */

.status {
    height: 20px;
    flex: none;
    display: flex;
    gap: 2px;
    padding: 1px 1px 0;
    background: #a4bbc9;
    border-bottom: 2px solid #4f6b80;
}

.cell {
    display: flex;
    align-items: center;
    justify-content: center;
    border: 1px solid #5f7886;
    border-bottom: 0;
    background: linear-gradient(#acc4d4, #7d95a3);
}

.grow {
    flex: 1;
}

.icon {
    width: 22px;
}

.count {
    width: 102px;
}

.disc {
    width: 42px;
    gap: 4px;
}

.blank {
    width: 32px;
}

.version {
    width: 170px;
}

.wheel {
    width: 14px;
    height: 14px;
    border-radius: 50%;
    background: radial-gradient(#fff, transparent 35%), conic-gradient(#f0f030, #ff9020, #ff3030, #f030f0, #3030ff, #30e0f0, #30e030, #f0f030);
}

.swatches {
    display: flex;
}

.swatches div {
    width: 39px;
    display: flex;
    align-items: center;
    justify-content: center;
    gap: 3px;
    border: 1px solid #5f7886;
    border-bottom: 0;
    background: #8ca4b3;
}

.swatches i {
    width: 14px;
    height: 11px;
    background: #000;
    border: 1px solid #222;
}

.swatches .gray {
    background: #8fa7b6;
    border-color: #b0c5d2 #667e8c #667e8c #b0c5d2;
}

.swatches .white {
    background: #fff;
    border-color: #ddd;
}

.swatches .pale {
    background: #bfd7e6;
    border-color: #dcebf5;
}

.disc input {
    width: 13px;
    height: 13px;
    margin: 0;
    appearance: none;
    background: #fff;
    border: 1px solid #4a616f;
}
```
